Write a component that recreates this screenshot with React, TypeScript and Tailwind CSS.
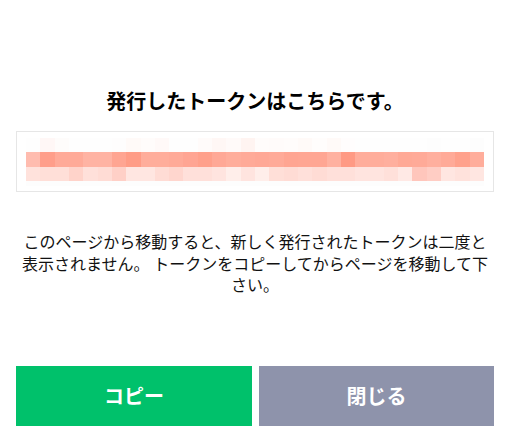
const top = [
  "#fefefe", "#fff7f6", "#fefcfb", "#fefefe", "#fefefe", "#fefefe", "#fefdfd", "#fffaf8",
  "#fffcfb", "#fff9f8", "#fefefe", "#fefefe", "#fffbfa", "#fff7f5", "#fffaf9", "#fff4f1",
  "#fffcfb", "#fffbfa", "#fffcfb", "#fffaf8", "#fffdfc", "#fffaf8", "#fffdfd", "#fefefe",
  "#fefefe", "#fefefe", "#fefefe", "#fefefe", "#fdfdfd", "#fefefe", "#fefefe", "#fdfdfd",
];

const mid = [
  "#ffbcaf", "#ff9e8a", "#ffaa98", "#ffaa98", "#ffb3a3", "#ffb3a3", "#ffa592", "#ff9c86",
  "#ffad9b", "#ffad9b", "#ffaa98", "#ffa593", "#ffa08b", "#ffa896", "#ffad9b", "#ffaa98",
  "#ffa896", "#ffaa98", "#ffa592", "#ffa693", "#ffa693", "#ffb1a0", "#ff9a84", "#ffad9b",
  "#ffad9b", "#ffaf9e", "#ffa996", "#ffaa98", "#ffaf9e", "#ffaa98", "#ffa18c", "#ffad9b",
];

const bottom = [
  "#ffe2dc", "#ffdfd8", "#ffdfd8", "#ffd3ca", "#ffe0da", "#ffdcd5", "#ffd0c7", "#ffe6e1",
  "#ffe6e1", "#ffdcd5", "#ffd6ce", "#ffe0da", "#ffe0da", "#ffe4df", "#ffeeea", "#ffe4df",
  "#ffeeea", "#ffdfd8", "#ffdcd5", "#ffe0da", "#ffdcd5", "#ffe0da", "#ffe0da", "#ffe4df",
  "#ffe4df", "#ffe0da", "#ffe9e5", "#ffc6bc", "#ffcdc4", "#ffe6e1", "#ffe2dc", "#ffe6e1",
];

function TokenStrip() {
  // blurred token, drawn as a mosaic of cells
  const rows = [top, mid, bottom];
  return (
    <div className="flex flex-col">
      {rows.map((row, i) => (
        <div key={i} className="flex h-[14.3px]">
          {row.map((c, j) => (
            <div key={j} className="flex-1" style={{ backgroundColor: c }} />
          ))}
        </div>
      ))}
      <div className="h-[5px] bg-[#fdfdfd]" />
    </div>
  );
}

export default function App() {
  return (
    <div
      className="w-[509px] h-[436px] bg-white flex flex-col pl-4 pr-[15px] text-[#111]"
      style={{ fontFamily: '"Noto Sans CJK JP", "Noto Sans", sans-serif' }}
    >
      <h1 className="mt-[86px] text-center text-[20px] font-bold leading-[30px] text-black">
        発行したトークンはこちらです。
      </h1>

      <div className="mt-[15px] h-[61px] border border-[#e6e6e6] px-[9px] pt-[6px]">
        <TokenStrip />
      </div>

      <p className="mt-[39px] text-center text-[16px] leading-[21.5px]">
        このページから移動すると、新しく発行されたトークンは二度と表示されません。 トークンをコピーしてからページを移動して下さい。
      </p>

      <div className="mt-auto mb-[10px] grid grid-cols-[236px_1fr] gap-[7px]">
        <button className="h-[60px] bg-[#00c16b] text-white text-[20px] font-bold">コピー</button>
        <button className="h-[60px] bg-[#8e93ab] text-white text-[20px] font-bold">閉じる</button>
      </div>
    </div>
  );
}
